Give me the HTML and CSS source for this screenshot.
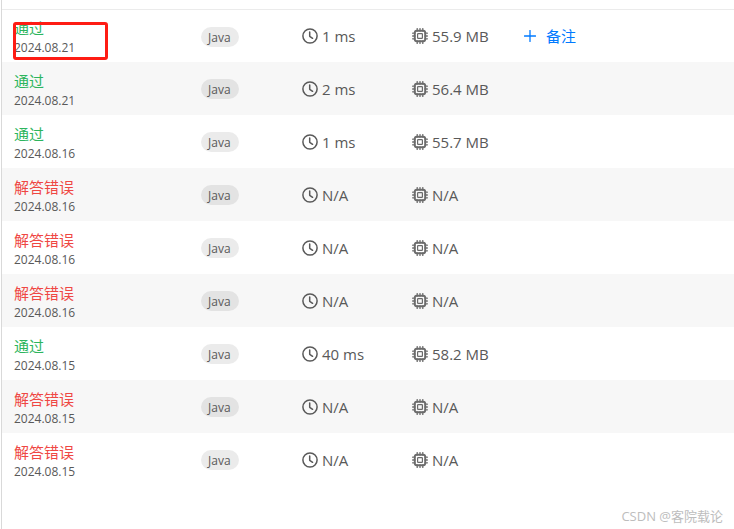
FILE: index.html
```html
<!DOCTYPE html>
<html lang="zh-CN">
<head>
    <title>提交记录</title>
    <meta charset="UTF-8">
    <meta name="viewport" content="width=device-width, initial-scale=1.0">
    <link rel="stylesheet" href="styles.css">
</head>
<body>
    <svg class="sprite" aria-hidden="true">
        <symbol id="clock" viewBox="0 0 16 16">
            <circle cx="8" cy="8" r="7.1" fill="none" stroke="currentColor" stroke-width="1.5"/>
            <path d="M7.7 3.9V8.3L10.6 10.3" fill="none" stroke="currentColor" stroke-width="1.5" stroke-linecap="round" stroke-linejoin="round"/>
        </symbol>
        <symbol id="chip" viewBox="0 0 16 16">
            <path d="M5.2 .6V3M8 .6V3M10.8 .6V3M5.2 13v2.4M8 13v2.4M10.8 13v2.4M.6 5.2H3M.6 8H3M.6 10.8H3M13 5.2h2.4M13 8h2.4M13 10.8h2.4" fill="none" stroke="currentColor" stroke-width="1.3" stroke-linecap="round"/>
            <rect x="2.8" y="2.8" width="10.4" height="10.4" rx="2" fill="none" stroke="currentColor" stroke-width="1.9"/>
            <rect x="5.6" y="5.6" width="4.8" height="4.8" rx=".6" fill="none" stroke="currentColor" stroke-width="1.2"/>
        </symbol>
        <symbol id="plus" viewBox="0 0 12 12">
            <path d="M6 .5v11M.5 6h11" fill="none" stroke="currentColor" stroke-width="1.3" stroke-linecap="round"/>
        </symbol>
    </svg>

    <main class="panel">
        <table class="submissions">
            <colgroup>
                <col class="col-status">
                <col class="col-lang">
                <col class="col-time">
                <col class="col-memory">
                <col>
            </colgroup>
            <tbody id="rows"></tbody>
        </table>
        <div class="watermark">CSDN @客院载论</div>
    </main>

    <script>
        var submissions = [
            { ok: true, date: '2024.08.21', time: '1 ms', memory: '55.9 MB', marked: true },
            { ok: true, date: '2024.08.21', time: '2 ms', memory: '56.4 MB' },
            { ok: true, date: '2024.08.16', time: '1 ms', memory: '55.7 MB' },
            { ok: false, date: '2024.08.16', time: 'N/A', memory: 'N/A' },
            { ok: false, date: '2024.08.16', time: 'N/A', memory: 'N/A' },
            { ok: false, date: '2024.08.16', time: 'N/A', memory: 'N/A' },
            { ok: true, date: '2024.08.15', time: '40 ms', memory: '58.2 MB' },
            { ok: false, date: '2024.08.15', time: 'N/A', memory: 'N/A' },
            { ok: false, date: '2024.08.15', time: 'N/A', memory: 'N/A' }
        ];

        function icon(name) {
            return `<svg class="icon icon-${name}" aria-hidden="true"><use href="#${name}"/></svg>`;
        }

        document.getElementById('rows').innerHTML = submissions.map(function (s) {
            return `
                <tr>
                    <td class="status-cell">
                        <div class="status ${s.ok ? 'accepted' : 'wrong'}">${s.ok ? '通过' : '解答错误'}</div>
                        <div class="date">${s.date}</div>
                        ${s.marked ? '<div class="highlight"></div>' : ''}
                    </td>
                    <td><span class="tag">Java</span></td>
                    <td><div class="stat">${icon('clock')}<span>${s.time}</span></div></td>
                    <td><div class="stat">${icon('chip')}<span>${s.memory}</span></div></td>
                    <td>${s.marked ? `<button type="button" class="note">${icon('plus')}<span>备注</span></button>` : ''}</td>
                </tr>`;
        }).join('');
    </script>
</body>
</html>
```

FILE: styles.css
```css
* { box-sizing: border-box; }
body { margin: 0; background: #fff; color: #595959; font-family: "Open Sans", "Noto Sans CJK SC", sans-serif; font-size: 15px; }
.sprite { display: none; }
.panel { position: relative; min-height: 100vh; margin-left: 1px; padding-top: 9px; border-left: 1px solid #d9d9d9; }
.submissions { width: 100%; table-layout: fixed; border-collapse: separate; border-spacing: 0; }
.col-status { width: 199px; }
.col-lang { width: 101px; }
.col-time { width: 110px; }
.col-memory { width: 112px; }
tr { height: 53px; }
tr:nth-child(even) { background: #f7f7f7; }
tr:first-child td { border-top: 1px solid #ebebeb; }
td { padding: 0; vertical-align: middle; }
.status-cell { position: relative; padding: 2px 0 0 12px; }
.status { line-height: 22px; }
.accepted { color: #2db55d; }
.wrong { color: #ef4743; }
.date { font-size: 12px; line-height: 18px; }
.tag { display: inline-block; padding: 1px 8px 0 7px; border-radius: 10px; background: rgba(0, 0, 0, 0.08); font-size: 12px; line-height: 19px; vertical-align: middle; }
.stat { display: flex; align-items: center; gap: 4px; line-height: 20px; }
.icon { flex: none; width: 16px; height: 16px; }
.icon-plus { width: 12px; height: 12px; }
.icon-chip { color: #6b6b6b; }
.note { display: flex; align-items: center; gap: 10px; padding: 0; border: none; background: none; color: #007aff; font: inherit; line-height: 20px; cursor: pointer; }
/* red frame drawn over the latest submission */
.highlight { position: absolute; top: 12px; left: 11px; width: 95px; height: 38px; border: 3px solid #fe1c14; border-radius: 3px; }
.watermark { position: absolute; right: 11px; bottom: 4px; color: #bdbdbd; font-size: 13px; line-height: 18px; }
```
